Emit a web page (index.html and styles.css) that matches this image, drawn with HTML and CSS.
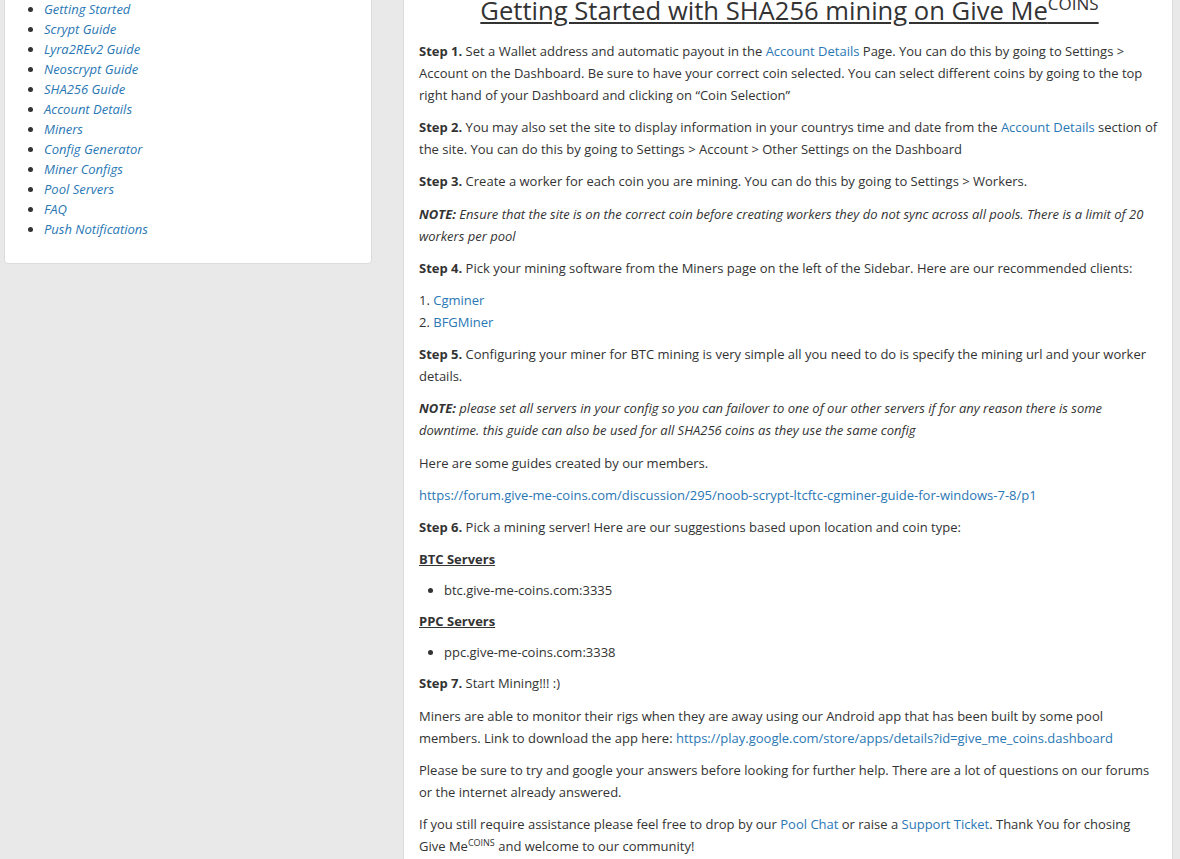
FILE: index.html
```html
<!DOCTYPE html>
<html>
<head>
<meta charset="utf-8">
<link rel="stylesheet" href="styles.css">
</head>
<body>
<div class="page">
  <aside class="sidebar">
    <ul class="nav">
      <li><a href="#">Getting Started</a></li>
      <li><a href="#">Scrypt Guide</a></li>
      <li><a href="#">Lyra2REv2 Guide</a></li>
      <li><a href="#">Neoscrypt Guide</a></li>
      <li><a href="#">SHA256 Guide</a></li>
      <li><a href="#">Account Details</a></li>
      <li><a href="#">Miners</a></li>
      <li><a href="#">Config Generator</a></li>
      <li><a href="#">Miner Configs</a></li>
      <li><a href="#">Pool Servers</a></li>
      <li><a href="#">FAQ</a></li>
      <li><a href="#">Push Notifications</a></li>
    </ul>
  </aside>
  <main class="content">
    <h1 class="title">Getting Started with SHA256 mining on Give Me<sup>COINS</sup></h1>
    <p><b>Step 1.</b> Set a Wallet address and automatic payout in the <a href="#">Account Details</a> Page. You can do this by going to Settings &gt; Account on the Dashboard. Be sure to have your correct coin selected. You can select different coins by going to the top right hand of your Dashboard and clicking on “Coin Selection”</p>
    <p><b>Step 2.</b> You may also set the site to display information in your countrys time and date from the <a href="#">Account Details</a> section of the site. You can do this by going to Settings &gt; Account &gt; Other Settings on the Dashboard</p>
    <p><b>Step 3.</b> Create a worker for each coin you are mining. You can do this by going to Settings &gt; Workers.</p>
    <p class="note"><b>NOTE:</b> Ensure that the site is on the correct coin before creating workers they do not sync across all pools. There is a limit of 20 workers per pool</p>
    <p><b>Step 4.</b> Pick your mining software from the Miners page on the left of the Sidebar. Here are our recommended clients:</p>
    <p>1. <a href="#">Cgminer</a><br>2. <a href="#">BFGMiner</a></p>
    <p><b>Step 5.</b> Configuring your miner for BTC mining is very simple all you need to do is specify the mining url and your worker details.</p>
    <p class="note"><b>NOTE:</b> please set all servers in your config so you can failover to one of our other servers if for any reason there is some downtime. this guide can also be used for all SHA256 coins as they use the same config</p>
    <p>Here are some guides created by our members.</p>
    <p><a href="#">https://forum.give-me-coins.com/discussion/295/noob-scrypt-ltcftc-cgminer-guide-for-windows-7-8/p1</a></p>
    <p><b>Step 6.</b> Pick a mining server! Here are our suggestions based upon location and coin type:</p>
    <p class="sub"><b>BTC Servers</b></p>
    <ul class="servers"><li>btc.give-me-coins.com:3335</li></ul>
    <p class="sub"><b>PPC Servers</b></p>
    <ul class="servers"><li>ppc.give-me-coins.com:3338</li></ul>
    <p><b>Step 7.</b> Start Mining!!! :)</p>
    <p>Miners are able to monitor their rigs when they are away using our Android app that has been built by some pool members. Link to download the app here: <a href="#">https://play.google.com/store/apps/details?id=give_me_coins.dashboard</a></p>
    <p>Please be sure to try and google your answers before looking for further help. There are a lot of questions on our forums or the internet already answered.</p>
    <p>If you still require assistance please feel free to drop by our <a href="#">Pool Chat</a> or raise a <a href="#">Support Ticket</a>. Thank You for chosing Give Me<sup>COINS</sup> and welcome to our community!</p>
  </main>
</div>
</body>
</html>
```
FILE: styles.css
```css
html, body {
  margin: 0;
  padding: 0;
}
body {
  background: #e9e9e9;
  font-family: "Open Sans", "Liberation Sans", sans-serif;
  font-size: 13px;
  color: #333;
  line-height: 22px;
}
a {
  color: #2a77b5;
  text-decoration: none;
}
.page {
  display: flex;
  align-items: flex-start;
  gap: 31px;
  padding: 0 7px 0 4px;
  margin-top: -40px;
}
.sidebar {
  width: 368px;
  flex: none;
  background: #fff;
  border: 1px solid #dcdcdc;
  border-radius: 4px;
  padding: 38px 0 24px;
  box-sizing: border-box;
}
.nav {
  margin: 0;
  padding-left: 39px;
  line-height: 20px;
}
.nav a {
  font-style: italic;
}
.content {
  flex: 1;
  background: #fff;
  border: 1px solid #dcdcdc;
  border-radius: 4px;
  padding: 34px 12px 20px 15px;
}
.title {
  font-size: 25.6px;
  font-weight: 400;
  text-align: center;
  text-decoration: underline;
  margin: 0 0 13px;
  line-height: 32px;
}
.title sup {
  font-size: 17px;
}
p {
  margin: 0 0 10.2px;
}
.note {
  font-style: italic;
}
.sub {
  text-decoration: underline;
}
.servers {
  margin: 0 0 10px;
  padding-left: 25px;
  line-height: 20px;
}
sup {
  font-size: 9px;
  line-height: 0;
}
```
